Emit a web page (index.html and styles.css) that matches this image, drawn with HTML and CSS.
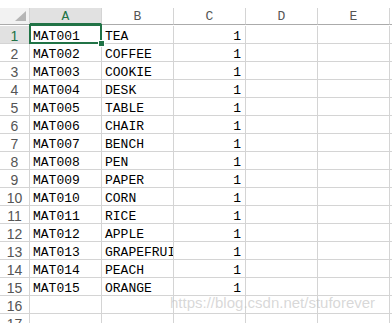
FILE: index.html
```html
<!DOCTYPE html>
<html>

<head>
    <title>Sheet1</title>
    <link rel="stylesheet" href="styles.css">
</head>

<body>
    <div class="sheet">
        <div class="grid" id="grid">
            <div class="corner"><span class="tri"></span></div>
            <div class="col-head active">A</div>
            <div class="col-head">B</div>
            <div class="col-head">C</div>
            <div class="col-head">D</div>
            <div class="col-head">E</div>
            <div class="col-head rest"></div>
        </div>
        <div class="selection"><span class="handle"></span></div>
        <div class="watermark">https://blog.csdn.net/stuforever</div>
    </div>

    <script>
        // item data for the sheet
        const items = [
            ['MAT001', 'TEA'], ['MAT002', 'COFFEE'], ['MAT003', 'COOKIE'],
            ['MAT004', 'DESK'], ['MAT005', 'TABLE'], ['MAT006', 'CHAIR'],
            ['MAT007', 'BENCH'], ['MAT008', 'PEN'], ['MAT009', 'PAPER'],
            ['MAT010', 'CORN'], ['MAT011', 'RICE'], ['MAT012', 'APPLE'],
            ['MAT013', 'GRAPEFRUIT'], ['MAT014', 'PEACH'], ['MAT015', 'ORANGE']
        ];

        const grid = document.getElementById('grid');

        function cell(cls, text) {
            const div = document.createElement('div');
            div.className = cls;
            div.textContent = text || '';
            grid.appendChild(div);
        }

        for (let r = 1; r <= 17; r++) {
            const item = items[r - 1];
            cell(r === 1 ? 'row-head active' : 'row-head', r);
            cell('cell', item ? item[0] : '');
            cell('cell', item ? item[1] : '');
            cell('cell num', item ? '1' : '');
            cell('cell', '');
            cell('cell', '');
            cell('cell rest', '');
        }
    </script>
</body>

</html>
```

FILE: styles.css
```css
body {
    margin: 0;
    background: white;
    overflow: hidden;
}

.sheet {
    position: relative;
    padding-top: 8px;
    height: 315px;
    overflow: hidden;
}

.grid {
    display: grid;
    grid-template-columns: 30px repeat(5, 72px) 1fr;
    grid-auto-rows: 18px;
    font-family: "Liberation Mono", monospace;
    font-size: 13px;
    color: #000;
}

.grid > div {
    box-sizing: border-box;
    border-right: 1px solid #d4d4d4;
    border-bottom: 1px solid #d4d4d4;
    line-height: 18px;
    white-space: nowrap;
    overflow: hidden;
}

.corner {
    position: relative;
    background: #f2f2f2;
    height: 17px;
    border-bottom-color: #ababab !important;
}

.tri {
    position: absolute;
    right: 3px;
    bottom: 3px;
    width: 0;
    height: 0;
    border-left: 11px solid transparent;
    border-bottom: 10px solid #b5b5b5;
}

.col-head {
    height: 17px;
    line-height: 17px !important;
    text-align: center;
    color: #555;
    background: #fff;
    border-bottom-color: #ababab !important;
}

.col-head.active {
    background: #e1e1e1;
    color: #217346;
    border-bottom: 2px solid #217346 !important;
}

.row-head {
    text-align: center;
    color: #555;
    font-family: "Liberation Sans", Arial, sans-serif;
    font-size: 14px;
    padding-top: 1px;
}

.row-head.active {
    background: #e1e1e1;
    color: #217346;
}

.cell {
    padding-left: 3px;
    padding-top: 2px;
}

.cell.num {
    text-align: right;
    padding-right: 4px;
}

.rest {
    border-right: none !important;
}

.selection {
    position: absolute;
    left: 29px;
    top: 24px;
    width: 69px;
    height: 16px;
    border: 2px solid #217346;
}

.handle {
    position: absolute;
    right: -5px;
    bottom: -5px;
    width: 5px;
    height: 5px;
    background: #217346;
    border: 1px solid #fff;
}

.watermark {
    position: absolute;
    left: 170px;
    top: 294px;
    font-family: "Liberation Sans", Arial, sans-serif;
    font-size: 15px;
    color: rgba(190, 190, 190, 0.6);
}
```
